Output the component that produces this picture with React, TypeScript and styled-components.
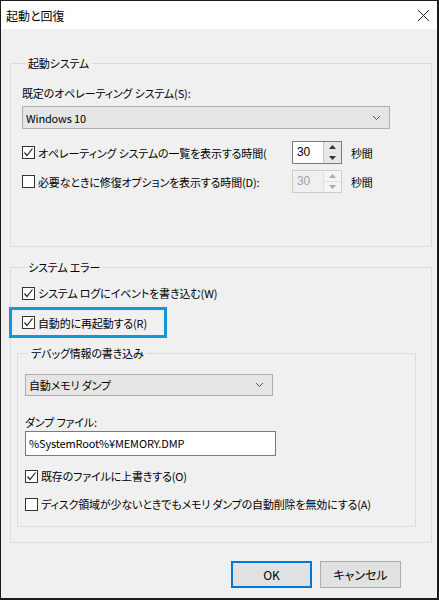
import styled, { createGlobalStyle } from 'styled-components';

const GlobalStyle = createGlobalStyle`
  html, body {
    margin: 0;
    padding: 0;
    background: #ffffff;
  }
  body {
    font-family: "Noto Sans CJK JP", "Liberation Sans", sans-serif;
    font-size: 11px;
    color: #000;
  }
`;

const Window = styled.div`
  width: 439px;
  height: 600px;
  box-sizing: border-box;
  border-style: solid;
  border-color: #1b1b1b;
  border-width: 1px 2px 2px 1px;
  display: flex;
  flex-direction: column;
  background: #f0f0f0;
  font-size: 11px;
  letter-spacing: -0.15px;
  font-feature-settings: "palt";
`;

const TitleBar = styled.div`
  height: 28px;
  flex: none;
  background: #ffffff;
  display: flex;
  align-items: center;
  justify-content: space-between;
  padding: 0 7px 0 5px;
  font-size: 12px;
  letter-spacing: 0;
`;

const CloseIcon = styled.svg`
  width: 13px;
  height: 13px;
`;

const Body = styled.div`
  flex: 1;
  display: flex;
  flex-direction: column;
  padding: 27px 5px 0 9px;
`;

const Group = styled.fieldset<{ $pt: number; $pb: number; $pl: number; $pr?: number; $mt?: number; $ml?: number }>`
  margin: ${(p) => p.$mt ?? 0}px 0 0 ${(p) => p.$ml ?? 0}px;
  border: 1px solid #dcdcdc;
  padding: ${(p) => p.$pt}px ${(p) => p.$pr ?? 0}px ${(p) => p.$pb}px ${(p) => p.$pl}px;
  min-width: 0;
  display: flex;
  flex-direction: column;
  align-items: flex-start;
`;

const InnerGroup = styled(Group)`
  align-self: stretch;
`;

const Legend = styled.legend`
  margin-left: 4px;
  padding: 0 2px;
  line-height: 14px;
`;

const Label = styled.div<{ $mt?: number }>`
  line-height: 16px;
  margin-top: ${(p) => p.$mt ?? 0}px;
`;

const Select = styled.div<{ $w: number; $h: number; $mt: number }>`
  width: ${(p) => p.$w}px;
  height: ${(p) => p.$h}px;
  margin-top: ${(p) => p.$mt}px;
  box-sizing: border-box;
  background: #e5e5e5;
  border: 1px solid #adadad;
  display: flex;
  align-items: center;
  justify-content: space-between;
  padding: 0 8px 0 3px;
`;

const Chevron = styled.svg`
  width: 9px;
  height: 6px;
`;

const Row = styled.div<{ $mt: number }>`
  display: flex;
  align-items: center;
  margin-top: ${(p) => p.$mt}px;
`;

const CheckLine = styled.label<{ $w?: number }>`
  display: flex;
  align-items: center;
  gap: 3px;
  line-height: 16px;
  height: 16px;
  width: ${(p) => (p.$w ? `${p.$w}px` : 'auto')};
  white-space: nowrap;
`;

const Box = styled.span`
  width: 13px;
  height: 13px;
  flex: none;
  box-sizing: border-box;
  border: 1px solid #333333;
  background: #ffffff;
  display: flex;
  align-items: center;
  justify-content: center;
`;

const Spin = styled.div<{ $disabled?: boolean }>`
  width: 50px;
  height: 23px;
  margin-left: 18px;
  box-sizing: border-box;
  border: 1px solid ${(p) => (p.$disabled ? '#cccccc' : '#7a7a7a')};
  background: ${(p) => (p.$disabled ? '#f0f0f0' : '#ffffff')};
  display: flex;
  color: ${(p) => (p.$disabled ? '#a0a0a0' : '#000')};
`;

const SpinValue = styled.div`
  flex: 1;
  padding-left: 4px;
  line-height: 21px;
  font-family: "Liberation Sans", sans-serif;
  font-size: 12px;
`;

const SpinButtons = styled.div<{ $disabled?: boolean }>`
  width: 17px;
  display: flex;
  flex-direction: column;
  border-left: 1px solid ${(p) => (p.$disabled ? '#e0e0e0' : '#c8c8c8')};
`;

const SpinArrow = styled.div<{ $disabled?: boolean }>`
  flex: 1;
  display: flex;
  align-items: center;
  justify-content: center;
  background: ${(p) => (p.$disabled ? '#f4f4f4' : '#e8e8e8')};
  & + & {
    border-top: 1px solid ${(p) => (p.$disabled ? '#e0e0e0' : '#c8c8c8')};
  }
`;

const Unit = styled.span`
  margin-left: 9px;
`;

const Highlight = styled.div`
  margin: 6px 0 0 -13px;
  width: 158px;
  height: 31px;
  box-sizing: border-box;
  border: 3px solid #1596d9;
  display: flex;
  align-items: center;
  padding-left: 10px;
`;

const TextField = styled.div`
  margin-top: 1px;
  width: 251px;
  height: 25px;
  box-sizing: border-box;
  border: 1px solid #7a7a7a;
  background: #ffffff;
  padding-left: 3px;
  line-height: 23px;
`;

const ButtonBar = styled.div`
  display: flex;
  justify-content: flex-end;
  gap: 8px;
  margin-top: 18px;
  padding-right: 31px;
`;

const Button = styled.button<{ $default?: boolean }>`
  width: 81px;
  height: 27px;
  box-sizing: border-box;
  font: inherit;
  font-size: 12px;
  color: #000;
  background: #e1e1e1;
  border: ${(p) => (p.$default ? '2px solid #0078d7' : '1px solid #adadad')};
  padding: 0;
`;

const Tick = () => (
  <svg width="11" height="11" viewBox="0 0 11 11">
    <polyline points="1.5,5.5 4,8.5 9.5,1.5" fill="none" stroke="#222" strokeWidth="1.2" />
  </svg>
);

const CheckItem = ({ checked, children, w }: { checked?: boolean; children: React.ReactNode; w?: number }) => (
  <CheckLine $w={w}>
    <Box>{checked && <Tick />}</Box>
    <span>{children}</span>
  </CheckLine>
);

const Arrow = ({ up, color }: { up?: boolean; color: string }) => (
  <svg width="7" height="4" viewBox="0 0 7 4">
    <polygon points={up ? '0,4 7,4 3.5,0' : '0,0 7,0 3.5,4'} fill={color} />
  </svg>
);

const SpinBox = ({ disabled }: { disabled?: boolean }) => (
  <Spin $disabled={disabled}>
    <SpinValue>30</SpinValue>
    <SpinButtons $disabled={disabled}>
      <SpinArrow $disabled={disabled}>
        <Arrow up color={disabled ? '#a8a8a8' : '#333'} />
      </SpinArrow>
      <SpinArrow $disabled={disabled}>
        <Arrow color={disabled ? '#a8a8a8' : '#333'} />
      </SpinArrow>
    </SpinButtons>
  </Spin>
);

const DropChevron = () => (
  <Chevron viewBox="0 0 9 6">
    <polyline points="1,1 4.5,4.5 8,1" fill="none" stroke="#555" strokeWidth="1" />
  </Chevron>
);

const App = () => {
  return (
    <>
      <GlobalStyle />
      <Window>
        <TitleBar>
          <span>起動と回復</span>
          <CloseIcon viewBox="0 0 13 13">
            <path d="M1 1 L12 12 M12 1 L1 12" stroke="#222" strokeWidth="1" />
          </CloseIcon>
        </TitleBar>
        <Body>
          <Group $pt={15} $pb={53} $pl={11}>
            <Legend>起動システム</Legend>
            <Label>既定のオペレーティング システム(S):</Label>
            <Select $w={368} $h={23} $mt={5}>
              <span>Windows 10</span>
              <DropChevron />
            </Select>
            <Row $mt={12}>
              <CheckItem checked w={252}>
                オペレーティング システムの一覧を表示する時間(
              </CheckItem>
              <SpinBox />
              <Unit>秒間</Unit>
            </Row>
            <Row $mt={6}>
              <CheckItem w={252}>必要なときに修復オプションを表示する時間(D):</CheckItem>
              <SpinBox disabled />
              <Unit>秒間</Unit>
            </Row>
          </Group>
          <Group $pt={11} $pb={15} $pl={11} $pr={15} $mt={13}>
            <Legend>システム エラー</Legend>
            <CheckItem checked>システム ログにイベントを書き込む(W)</CheckItem>
            <Highlight>
              <CheckItem checked>自動的に再起動する(R)</CheckItem>
            </Highlight>
            <InnerGroup $pt={14} $pb={14} $pl={7} $mt={8} $ml={-5}>
              <Legend>デバッグ情報の書き込み</Legend>
              <Select $w={248} $h={22} $mt={0}>
                <span>自動メモリ ダンプ</span>
                <DropChevron />
              </Select>
              <Label $mt={18}>ダンプ ファイル:</Label>
              <TextField>%SystemRoot%¥MEMORY.DMP</TextField>
              <Row $mt={12}>
                <CheckItem checked>既存のファイルに上書きする(O)</CheckItem>
              </Row>
              <Row $mt={12}>
                <CheckItem>ディスク領域が少ないときでもメモリ ダンプの自動削除を無効にする(A)</CheckItem>
              </Row>
            </InnerGroup>
          </Group>
          <ButtonBar>
            <Button $default>OK</Button>
            <Button>キャンセル</Button>
          </ButtonBar>
        </Body>
      </Window>
    </>
  );
};

export default App;
